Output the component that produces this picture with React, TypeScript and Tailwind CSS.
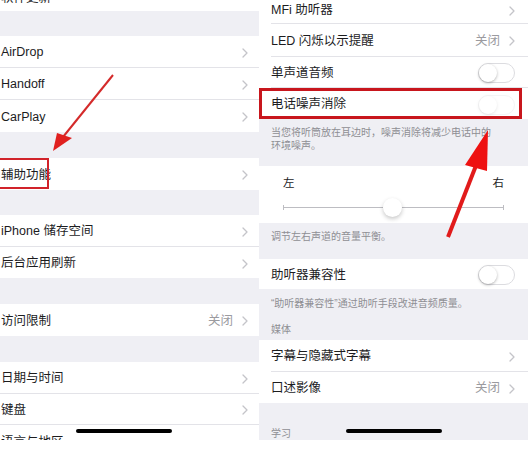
import React from 'react';

const FONT = "font-['Liberation_Sans','Noto_Sans_CJK_SC',sans-serif]";

const Chevron = () => (
  <svg width="6" height="10" viewBox="0 0 6 10" className="shrink-0">
    <path d="M1 1l4 4-4 4" stroke="#c4c4c9" strokeWidth="1.3" fill="none" strokeLinecap="round" strokeLinejoin="round" />
  </svg>
);

const Toggle = ({ faint = false }: { faint?: boolean }) => (
  <div
    className={`w-[37px] h-[20px] rounded-full border border-[#dcdce0] bg-white relative shrink-0 ${faint ? 'opacity-30' : ''}`}
  >
    <div className="absolute left-0 top-0 w-[18px] h-[18px] rounded-full bg-white shadow-[0_1px_3px_rgba(0,0,0,0.3)]" />
  </div>
);

interface RowProps {
  label: string;
  h: string;
  value?: string;
  chevron?: boolean;
  toggle?: boolean;
  faintToggle?: boolean;
  line?: boolean;
  side: 'left' | 'right';
}

const Row: React.FC<RowProps> = ({ label, h, value, chevron, toggle, faintToggle, line, side }) => {
  const pad = side === 'left' ? 'pl-[1px] pr-[11px]' : 'pr-[13px]';
  return (
    <div className={`${h} bg-white ${side === 'right' ? 'pl-[12px]' : ''} shrink-0`}>
      <div
        className={`h-full flex items-center justify-between pt-[2px] ${pad} ${
          line ? 'border-b border-[#e3e3e8]' : ''
        }`}
      >
        <span className="text-[12.5px] text-[#1c1c1e] whitespace-nowrap">{label}</span>
        <div className="flex items-center gap-[9px]">
          {value && <span className="text-[12.5px] text-[#9b9ba0]">{value}</span>}
          {chevron && <Chevron />}
          {toggle && <Toggle />}
          {faintToggle && <Toggle faint />}
        </div>
      </div>
    </div>
  );
};

const Gap = ({ h }: { h: string }) => <div className={`${h} bg-[#efeff4] shrink-0`} />;

const Note = ({ children, className = '' }: { children: React.ReactNode; className?: string }) => (
  <p className={`text-[10px] leading-[13px] text-[#8e8e93] pl-[12px] pr-[32px] ${className}`}>{children}</p>
);

export default function App() {
  return (
    <div className={`relative w-[531px] h-[449px] bg-white overflow-hidden flex ${FONT}`}>
      {/* left screen: 通用 */}
      <div className="w-[259px] h-full flex flex-col">
        <div className="h-[11px] overflow-hidden shrink-0 bg-white">
          <div className="h-[32px] -mt-[18px] flex items-center pl-[1px] pr-[11px] justify-between">
            <span className="text-[12.5px] text-[#1c1c1e]">软件更新</span>
          </div>
        </div>
        <Gap h="h-[25px]" />
        <Row side="left" h="h-[32px]" label="AirDrop" chevron line />
        <Row side="left" h="h-[32px]" label="Handoff" chevron line />
        <Row side="left" h="h-[32px]" label="CarPlay" chevron />
        <Gap h="h-[26px]" />
        <Row side="left" h="h-[32px]" label="辅助功能" chevron />
        <Gap h="h-[25px]" />
        <Row side="left" h="h-[32px]" label="iPhone 储存空间" chevron line />
        <Row side="left" h="h-[31px]" label="后台应用刷新" chevron />
        <Gap h="h-[26px]" />
        <Row side="left" h="h-[32px]" label="访问限制" value="关闭" chevron />
        <Gap h="h-[26px]" />
        <Row side="left" h="h-[32px]" label="日期与时间" chevron line />
        <Row side="left" h="h-[31px]" label="键盘" chevron line />
        <div className="h-[15px] overflow-hidden shrink-0 bg-white flex items-start pl-[1px] pt-[10px]">
          <span className="text-[12.5px] leading-[15px] text-[#1c1c1e]">语言与地区</span>
        </div>
      </div>

      {/* right screen: 辅助功能 */}
      <div className="w-[269px] h-full flex flex-col">
        <div className="h-[24px] bg-white pl-[12px] shrink-0">
          <div className="h-full flex items-center justify-between pr-[13px] pb-[2px] border-b border-[#e3e3e8]">
            <span className="text-[12.5px] text-[#1c1c1e]">MFi 助听器</span>
            <Chevron />
          </div>
        </div>
        <Row side="right" h="h-[33px]" label="LED 闪烁以示提醒" value="关闭" chevron line />
        <Row side="right" h="h-[31px]" label="单声道音频" toggle line />
        <Row side="right" h="h-[31px]" label="电话噪声消除" faintToggle />
        <div className="h-[47px] bg-[#efeff4] pt-[7px] shrink-0">
          <Note>当您将听筒放在耳边时，噪声消除将减少电话中的环境噪声。</Note>
        </div>
        <div className="h-[57px] bg-white shrink-0 px-[24px] pt-[10px] flex flex-col">
          <div className="flex justify-between text-[11.5px] leading-[14px] text-[#1c1c1e]">
            <span>左</span>
            <span>右</span>
          </div>
          <div className="relative mt-[17px] h-[1px] bg-[#bdbdc2]">
            <div className="absolute left-0 -top-[2px] w-[1px] h-[5px] bg-[#bdbdc2]" />
            <div className="absolute right-0 -top-[2px] w-[1px] h-[5px] bg-[#bdbdc2]" />
            <div className="absolute left-[100px] -top-[9px] w-[19px] h-[19px] rounded-full bg-white shadow-[0_2px_4px_rgba(0,0,0,0.22)]" />
          </div>
        </div>
        <div className="h-[36px] bg-[#efeff4] pt-[7px] shrink-0">
          <Note>调节左右声道的音量平衡。</Note>
        </div>
        <Row side="right" h="h-[30px]" label="助听器兼容性" toggle />
        <div className="h-[51px] bg-[#efeff4] pt-[8px] shrink-0">
          <Note>“助听器兼容性”通过助听手段改进音频质量。</Note>
          <Note className="mt-[13px]">媒体</Note>
        </div>
        <Row side="right" h="h-[32px]" label="字幕与隐藏式字幕" chevron line />
        <Row side="right" h="h-[31px]" label="口述影像" value="关闭" chevron />
        <div className="h-[37px] bg-[#efeff4] pt-[24px] shrink-0">
          <Note>学习</Note>
        </div>
      </div>

      {/* home indicators */}
      <div className="absolute left-[76px] top-[429px] w-[96px] h-[4px] rounded-full bg-black" />
      <div className="absolute left-[346px] top-[429px] w-[96px] h-[4px] rounded-full bg-black" />

      {/* red highlight boxes */}
      <div className="absolute -left-[3px] top-[158px] w-[52px] h-[31px] border-2 border-[#d1232a]" />
      <div className="absolute left-[259px] top-[88px] w-[263px] h-[31px] border-[3px] border-[#c8161d]" />

      {/* arrows */}
      <svg className="absolute inset-0 pointer-events-none" width="531" height="449" viewBox="0 0 531 449">
        <line x1="113" y1="75" x2="63" y2="137" stroke="#d42a2a" strokeWidth="2" />
        <polygon points="53,151 57,133 72,138" fill="#e0201f" />
        <line x1="448" y1="237" x2="477" y2="163" stroke="#e11b1b" strokeWidth="4" />
        <polygon points="488,130 465,165 487,171" fill="#ee1111" />
      </svg>
    </div>
  );
}
